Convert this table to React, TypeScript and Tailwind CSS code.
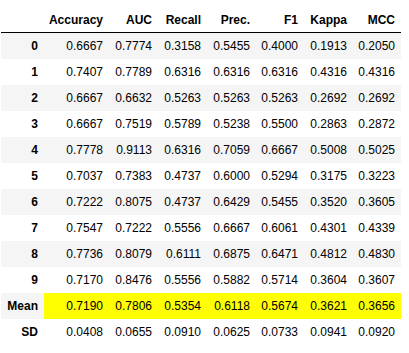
import React from "react";

const cols = ["Accuracy", "AUC", "Recall", "Prec.", "F1", "Kappa", "MCC"];
const rows: [string, string[]][] = [
  ["0", ["0.6667", "0.7774", "0.3158", "0.5455", "0.4000", "0.1913", "0.2050"]],
  ["1", ["0.7407", "0.7789", "0.6316", "0.6316", "0.6316", "0.4316", "0.4316"]],
  ["2", ["0.6667", "0.6632", "0.5263", "0.5263", "0.5263", "0.2692", "0.2692"]],
  ["3", ["0.6667", "0.7519", "0.5789", "0.5238", "0.5500", "0.2863", "0.2872"]],
  ["4", ["0.7778", "0.9113", "0.6316", "0.7059", "0.6667", "0.5008", "0.5025"]],
  ["5", ["0.7037", "0.7383", "0.4737", "0.6000", "0.5294", "0.3175", "0.3223"]],
  ["6", ["0.7222", "0.8075", "0.4737", "0.6429", "0.5455", "0.3520", "0.3605"]],
  ["7", ["0.7547", "0.7222", "0.5556", "0.6667", "0.6061", "0.4301", "0.4339"]],
  ["8", ["0.7736", "0.8079", "0.6111", "0.6875", "0.6471", "0.4812", "0.4830"]],
  ["9", ["0.7170", "0.8476", "0.5556", "0.5882", "0.5714", "0.3604", "0.3607"]],
  ["Mean", ["0.7190", "0.7806", "0.5354", "0.6118", "0.5674", "0.3621", "0.3656"]],
  ["SD", ["0.0408", "0.0655", "0.0910", "0.0625", "0.0733", "0.0941", "0.0920"]],
];

const grid =
  "grid grid-cols-[43px_65px_49px_49px_49px_48px_49px_48px] w-[400px]";

export default function App() {
  return (
    <div
      className="pt-[7px] pl-px bg-white text-black text-[12px] leading-[14px]"
      style={{ fontFamily: '"Liberation Sans", Arial, sans-serif' }}
    >
      <div className={`${grid} h-[26px] border-b border-black font-bold`}>
        <div />
        {cols.map((c) => (
          <div key={c} className="flex items-center justify-end pr-[6px]">
            {c}
          </div>
        ))}
      </div>
      {rows.map(([idx, vals], i) => {
        const striped = i % 2 === 0;
        const mean = idx === "Mean";
        return (
          <div
            key={idx}
            className={`${grid} h-[26px] ${striped ? "bg-[#f5f5f5]" : "bg-white"}`}
          >
            <div className="flex items-center justify-end pr-[6px] font-bold">
              {idx}
            </div>
            {vals.map((v, j) => (
              <div
                key={j}
                className={`flex items-center justify-end pr-[6px] ${
                  mean ? "bg-[#ffff00]" : ""
                }`}
              >
                {v}
              </div>
            ))}
          </div>
        );
      })}
    </div>
  );
}
